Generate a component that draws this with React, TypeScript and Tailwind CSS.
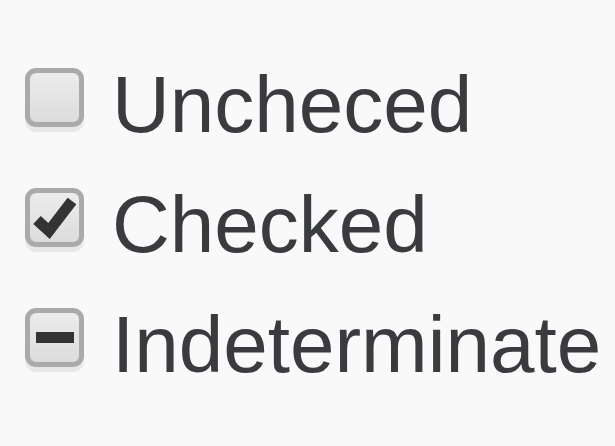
import React from "react";

function Box({ kind }: { kind: "none" | "check" | "dash" }) {
  return (
    <div className="relative mt-[23px] h-[59px] w-[59px] shrink-0 rounded-[11px] border-[5px] border-[#aaaaaa] bg-gradient-to-b from-[#ececec] to-[#dcdcdc] shadow-[0_5px_1px_rgba(0,0,0,0.07)]">
      {kind !== "none" && (
        <svg className="absolute left-[-5px] top-[-5px]" width="59" height="59" viewBox="0 0 59 59">
          {kind === "check" ? (
            <polyline points="12,32 24,43 47,13" fill="none" stroke="#333333" strokeWidth="11" strokeLinejoin="miter" strokeLinecap="butt" />
          ) : (
            <rect x="11" y="24" width="38" height="11" fill="#333333" />
          )}
        </svg>
      )}
    </div>
  );
}

export default function App() {
  const rows: { label: string; kind: "none" | "check" | "dash" }[] = [
    { label: "Uncheced", kind: "none" },
    { label: "Checked", kind: "check" },
    { label: "Indeterminate", kind: "dash" },
  ];
  return (
    <div className="h-[446px] w-[615px] overflow-hidden bg-[#f9f9f9] pt-[45px] pl-[25px]">
      {rows.map((r) => (
        <div key={r.label} className="flex h-[120px] items-start gap-[28px]">
          <Box kind={r.kind} />
          <span className="whitespace-nowrap text-[80px] leading-[120px] text-[#393b3f] [font-family:'Liberation_Sans',Arial,sans-serif]">
            {r.label}
          </span>
        </div>
      ))}
    </div>
  );
}
